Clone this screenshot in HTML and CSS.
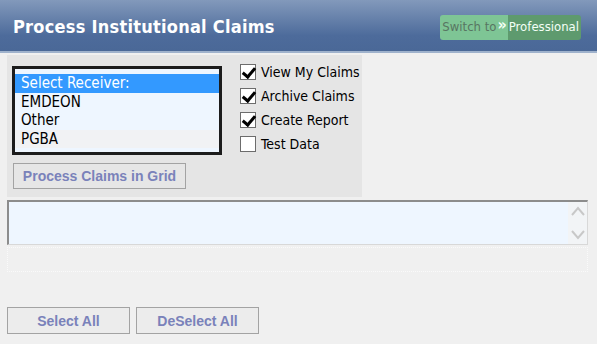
FILE: index.html
```html
<!DOCTYPE html>
<html lang="en">
<head>
  <meta charset="UTF-8" />
  <title>Process Institutional Claims</title>
  <link rel="stylesheet" href="styles.css">
</head>
<body>

  <div class="header">
    <h1>Process Institutional Claims</h1>
    <div class="switch">
      <span class="switch-left">Switch to</span>
      <span class="switch-arrows">&raquo;</span>
      <span class="switch-right">Professional</span>
    </div>
  </div>

  <div class="page">
    <div class="top-panel">
      <div class="left-col">
        <div class="receiver-list">
          <div class="option selected">Select Receiver:</div>
          <div class="option">EMDEON</div>
          <div class="option">Other</div>
          <div class="option alt">PGBA</div>
        </div>
        <button class="btn grid-btn">Process Claims in Grid</button>
      </div>
      <div class="checks">
        <label class="check"><span class="box on"></span>View My Claims</label>
        <label class="check"><span class="box on"></span>Archive Claims</label>
        <label class="check"><span class="box on"></span>Create Report</label>
        <label class="check"><span class="box"></span>Test Data</label>
      </div>
    </div>

    <div class="claims-box">
      <div class="claims-inner"></div>
      <div class="scroller">
        <svg width="14" height="36" viewBox="0 0 14 36">
          <polyline points="1,10 7,3 13,10" fill="none" stroke="#c8c8c8" stroke-width="2"/>
          <polyline points="1,26 7,33 13,26" fill="none" stroke="#c8c8c8" stroke-width="2"/>
        </svg>
      </div>
    </div>

    <div class="dotted-area"></div>

    <div class="bottom-buttons">
      <button class="btn wide">Select All</button>
      <button class="btn wide">DeSelect All</button>
    </div>
  </div>

</body>
</html>
```

FILE: styles.css
```css
* { box-sizing: border-box; margin: 0; padding: 0; }

body {
  width: 597px;
  height: 344px;
  background: #f0f0f0;
  font-family: "DejaVu Sans Condensed", "DejaVu Sans", sans-serif;
  overflow: hidden;
}

.header {
  height: 53px;
  background: linear-gradient(#8299bb, #4d6b9b 70%, #4a6897);
  border-bottom: 2px solid #9fb2cc;
  display: flex;
  align-items: flex-start;
  justify-content: space-between;
  padding: 14px 16px 0 13px;
}

.header h1 {
  color: #fff;
  font-size: 18px;
  font-weight: bold;
  font-family: "DejaVu Sans Condensed", "DejaVu Sans", sans-serif;
  letter-spacing: 0.25px;
  margin-top: 2px;
}

.switch {
  display: flex;
  height: 25px;
  margin-top: 1px;
  border-radius: 3px;
  overflow: hidden;
  font-size: 13px;
  font-family: "DejaVu Sans Condensed", sans-serif;
}

.switch-left {
  background: #7ec595;
  color: #587562;
  padding: 4px 0 0 2px;
}

.switch-arrows {
  background: #7ec595;
  color: #f2fff4;
  font-weight: bold;
  font-size: 16px;
  padding: 0 1px;
}

.switch-right {
  background: #5e9a6e;
  color: #f4fff6;
  padding: 4px 2px 0 1px;
}

.page {
  padding: 2px 9px 0 7px;
}

.top-panel {
  width: 355px;
  height: 142px;
  background: #e5e5e5;
  display: flex;
  padding: 11px 0 0 5px;
}

.left-col {
  width: 228px;
}

.receiver-list {
  width: 210px;
  height: 89px;
  border: 3px solid #1c1c1c;
  background: #eef6ff;
  padding-top: 5px;
  font-size: 15px;
}

.option {
  height: 18.5px;
  line-height: 18px;
  padding-left: 6px;
  color: #000;
}

.option.selected {
  background: #3399ff;
  color: #fff;
}

.option.alt {
  background: #f1f2f4;
}

.btn {
  font-family: "Liberation Sans", Arial, sans-serif;
  font-weight: bold;
  font-size: 14px;
  color: #7a82ba;
  background: #ececec;
  border: 1px solid #a3a3a3;
  cursor: pointer;
}

.grid-btn {
  margin-top: 8px;
  margin-left: 1px;
  width: 173px;
  height: 26px;
  background: #e6e6e6;
}

.checks {
  display: flex;
  flex-direction: column;
  gap: 7px;
  margin-top: -3px;
  font-size: 14px;
}

.check {
  display: flex;
  align-items: center;
  height: 17px;
  color: #000;
}

.box {
  width: 16px;
  height: 16px;
  border: 1px solid #6c6c6c;
  background: #fff;
  margin-right: 5px;
  position: relative;
}

.box.on::after {
  content: "";
  position: absolute;
  left: 4px;
  top: 0px;
  width: 5px;
  height: 10px;
  border-right: 3px solid #000;
  border-bottom: 3px solid #000;
  transform: rotate(40deg);
}

.claims-box {
  margin-top: 3px;
  width: 581px;
  height: 45px;
  display: flex;
  border-top: 2px solid #8c8c8c;
  border-left: 2px solid #8c8c8c;
  border-right: 1px solid #d8d8d8;
  border-bottom: 1px solid #d8d8d8;
  background: #eef6ff;
}

.claims-inner {
  flex: 1;
}

.scroller {
  width: 19px;
  background: #f2f4f6;
  display: flex;
  justify-content: center;
  padding-top: 3px;
}

.dotted-area {
  margin-top: 2px;
  width: 581px;
  height: 25px;
  border: 1px dotted #fafafa;
}

.bottom-buttons {
  display: flex;
  gap: 6px;
  margin-top: 35px;
}

.wide {
  width: 123px;
  height: 27px;
}
```
